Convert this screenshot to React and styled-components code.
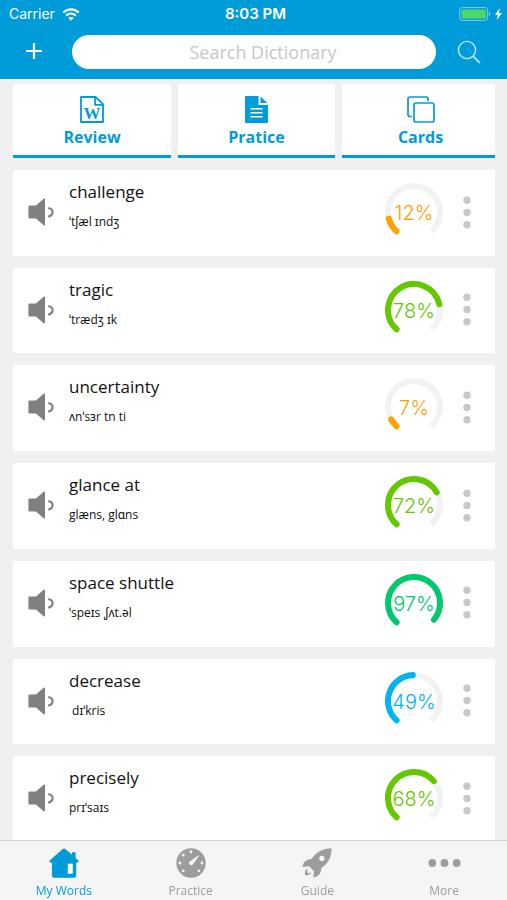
import React from "react";
import styled, { createGlobalStyle } from "styled-components";

const BLUE = "#009cd9";
const GREY = "#9d9d9d";
const SANS = '"Open Sans", "Noto Sans", sans-serif';
const SYSTEM = 'Inter, "Liberation Sans", sans-serif';

const GlobalStyle = createGlobalStyle`
  *, *::before, *::after { box-sizing: border-box; }
  body { margin: 0; background: #f0f0f0; font-family: ${SANS}; color: #111; }
  button, input { font: inherit; }
  svg { display: block; flex: none; }
`;

const Page = styled.div`
  min-height: 100vh;
  display: flex;
  flex-direction: column;
`;

const Header = styled.header`
  background: ${BLUE};
  color: #fff;
  padding-bottom: 10px;
`;

const StatusBar = styled.div`
  display: grid;
  grid-template-columns: 1fr auto 1fr;
  align-items: center;
  height: 28px;
  padding: 0 5px 0 9px;
  font-family: ${SYSTEM};
  font-size: 14px;
  line-height: 20px;
`;

const StatusSide = styled.div`
  display: flex;
  align-items: center;
  justify-content: ${(p) => (p.$end ? "flex-end" : "flex-start")};
  gap: ${(p) => (p.$end ? 4 : 7)}px;
`;

const Clock = styled.time`
  font-size: 15px;
  font-weight: 600;
`;

const SearchBar = styled.form`
  display: grid;
  grid-template-columns: 68px 1fr 57px;
  align-items: center;
  padding: 7px 10px 0 0;
  column-gap: 4px;
`;

const IconButton = styled.button`
  display: flex;
  align-items: center;
  justify-content: center;
  height: 34px;
  padding: 0;
  border: 0;
  background: none;
  color: inherit;
  cursor: pointer;
`;

const SearchInput = styled.input`
  min-width: 0;
  height: 34px;
  padding: 0 8px 0 26px;
  border: 0;
  border-radius: 17px;
  background: #fff;
  color: #111;
  font-size: 18px;
  line-height: 24px;
  text-align: center;
  &::placeholder { color: #c6c6cb; opacity: 1; }
`;

const Main = styled.main`
  flex: 1;
  display: flex;
  flex-direction: column;
  gap: 12px;
  padding: 5px 12px 0 13px;
`;

const Modes = styled.nav`
  display: grid;
  grid-template-columns: 158fr 157fr 153fr;
  gap: 7px;
`;

const ModeButton = styled.button`
  display: flex;
  flex-direction: column;
  align-items: center;
  gap: 2px;
  height: 74px;
  padding: 12px 0 0;
  border: 0;
  border-bottom: 3px solid ${BLUE};
  background: #fff;
  color: ${BLUE};
  font-size: 16px;
  font-weight: 700;
  line-height: 24px;
  cursor: pointer;
  &:last-child { padding-left: 4px; }
`;

const WordList = styled.ul`
  flex: 1;
  display: grid;
  grid-auto-rows: minmax(84px, 1fr);
  gap: 12px;
  margin: 0;
  padding: 0;
  list-style: none;
`;

const WordCard = styled.li`
  display: flex;
  align-items: flex-start;
  background: #fff;
  border-radius: 1px;
`;

const SpeakButton = styled(IconButton)`
  width: 56px;
  height: 84px;
`;

const WordText = styled.div`
  flex: 1;
  min-width: 0;
  padding-top: 10px;
`;

const Word = styled.h2`
  margin: 0;
  font-size: 17px;
  font-weight: 400;
  line-height: 24px;
`;

const Phonetic = styled.p`
  margin: 8px 0 0;
  font-size: 12px;
  line-height: 20px;
  white-space: pre;
`;

const GaugeBox = styled.div`
  display: grid;
  place-items: center;
  width: 60px;
  height: 84px;
  color: ${(p) => p.$color};
  font-family: ${SYSTEM};
  font-size: 20px;
  font-weight: 300;
  line-height: 24px;
  > * { grid-area: 1 / 1; }
`;

const GaugeLabel = styled.span`
  padding-top: 2px;
`;

const MenuButton = styled(IconButton)`
  width: 45px;
  height: 84px;
  margin-right: 6px;
`;

const TabBar = styled.nav`
  position: sticky;
  bottom: 0;
  display: grid;
  grid-template-columns: repeat(4, 1fr);
  height: 60px;
  margin-top: -2px;
  border-top: 1px solid #d2d2d2;
  background: #f5f5f5;
`;

const TabLink = styled.a`
  display: flex;
  flex-direction: column;
  align-items: center;
  gap: 3px;
  padding: 7px 0 0 1px;
  color: ${(p) => (p.$active ? BLUE : GREY)};
  font-size: 12px;
  line-height: 20px;
  text-decoration: none;
`;

const WifiIcon = () => (
  <svg width="18" height="13" viewBox="0 0 18 13" aria-hidden="true" fill="none" stroke="#fff" strokeWidth="2.2">
    <path d="M1.3 4.5C5.7.2 12.3.2 16.7 4.5" />
    <path d="M4.2 7.6c2.8-2.6 6.8-2.6 9.6 0" />
    <path d="M9 12.7 6.3 10c1.5-1.3 3.9-1.3 5.4 0Z" fill="#fff" stroke="none" />
  </svg>
);

const BatteryIcon = () => (
  <svg width="32" height="14" viewBox="0 0 32 14" aria-hidden="true">
    <rect x=".6" y=".6" width="28" height="12.8" rx="2.6" fill="none" stroke="#7fcbea" strokeWidth="1" />
    <rect x="2.4" y="2.4" width="24.4" height="9.2" rx="1" fill="#4cd864" />
    <path d="M30 4.8c1.8.6 1.8 3.8 0 4.4Z" fill="#7fcbea" />
  </svg>
);

const BoltIcon = () => (
  <svg width="7" height="12" viewBox="0 0 7 12" aria-hidden="true">
    <path d="M4.8 0 0 6.8h2.8L1.8 12 7 5H4Z" fill="#fff" />
  </svg>
);

const PlusIcon = () => (
  <svg width="18" height="20" viewBox="0 0 18 20" aria-hidden="true">
    <path d="M9 1v16M1 9h16" stroke="#fff" strokeWidth="2.2" fill="none" />
  </svg>
);

const SearchIcon = () => (
  <svg width="24" height="24" viewBox="0 0 24 24" aria-hidden="true" fill="none" stroke="#b9e8fa" strokeWidth="1.4">
    <circle cx="10" cy="10" r="8.6" />
    <path d="m16 16.2 6.8 6.6" strokeWidth="1.8" />
  </svg>
);

const WordFileIcon = () => (
  <svg width="24" height="27" viewBox="0 0 24 27" aria-hidden="true">
    <path d="M1 1h14.5L23 8.2V26H1ZM15 1v7.8h8" fill="none" stroke={BLUE} strokeWidth="1.8" strokeLinejoin="round" />
    <text x="12" y="23" textAnchor="middle" fontFamily="Liberation Serif, serif" fontWeight="700" fontSize="17" fill={BLUE}>
      W
    </text>
  </svg>
);

const DocumentIcon = () => (
  <svg width="23" height="27" viewBox="0 0 23 27" aria-hidden="true">
    <path d="M1 0h12.5v9H23v17q0 1-1 1H1q-1 0-1-1V1q0-1 1-1Z" fill={BLUE} />
    <path d="M15.5.5V7h6.8Z" fill={BLUE} />
    <path d="M5.5 12.7h12M5.5 16.7h12M5.5 20.7h12" stroke="#fff" strokeWidth="1.6" />
  </svg>
);

const CardsIcon = () => (
  <svg width="28" height="27" viewBox="0 0 28 27" aria-hidden="true" fill="none" stroke={BLUE} strokeWidth="1.7">
    <rect x="7" y="7" width="20" height="19" rx="2" />
    <path d="M5 20.5H3q-2 0-2-2V3q0-2 2-2h16q2 0 2 2v2.2" />
  </svg>
);

const SpeakerIcon = () => (
  <svg width="26" height="28" viewBox="0 0 26 28" aria-hidden="true">
    <path d="M1.6 7.5H8L15.6.7q1.4-.9 1.4.7v25.2q0 1.6-1.4.7L8 20.5H1.6Q.4 20.5.4 19.3V8.7q0-1.2 1.2-1.2Z" fill="#808080" />
    <path d="M20.2 10c5.8 1 5.8 7.6 0 8.6" fill="none" stroke="#808080" strokeWidth="2.2" />
  </svg>
);

const DotsIcon = () => (
  <svg width="8" height="33" viewBox="0 0 8 33" aria-hidden="true" fill="#c8c8c8">
    <circle cx="4" cy="4.2" r="3.7" />
    <circle cx="4" cy="16.5" r="3.7" />
    <circle cx="4" cy="28.8" r="3.7" />
  </svg>
);

const HomeIcon = () => (
  <svg width="30" height="30" viewBox="0 0 30 30" aria-hidden="true">
    <path
      d="M14 .8q1-.8 2 0l7 6V4.2h3.6V10l2.8 2.4q.9 1.9-1 2.2h-1.2v13q0 2.1-2.1 2.1H5q-2.1 0-2.1-2.1v-13H1.6q-1.9-.3-.9-2.2Z"
      fill={BLUE}
    />
    <rect x="18.8" y="15.7" width="5" height="10" fill="#fff" />
  </svg>
);

const SpeedIcon = () => (
  <svg width="30" height="30" viewBox="0 0 30 30" aria-hidden="true">
    <circle cx="15" cy="15" r="14.7" fill={GREY} />
    <g fill="#f5f5f5">
      <circle cx="15" cy="4" r="1.4" />
      <circle cx="7.2" cy="7.2" r="1.4" />
      <circle cx="4" cy="15" r="1.4" />
      <circle cx="7.2" cy="22.8" r="1.4" />
      <circle cx="22.8" cy="22.8" r="1.4" />
      <circle cx="26" cy="15" r="1.4" />
      <path d="M22.4 7.2q.8.3.4 1l-5.4 7.6q-1 1.8-2.8 1.4-2.2-1-1.4-3.2Z" />
    </g>
  </svg>
);

const RocketIcon = () => (
  <svg width="30" height="30" viewBox="0 0 30 30" aria-hidden="true">
    <path
      fill={GREY}
      fillRule="evenodd"
      d="M29.6.3C21 .3 14.6 3.9 9.7 10.7 4 11.5 1.2 14 .4 19l6.7-.7 4.8 4.9-.6 6.4c5.4-.8 7.7-4 8.1-9.5C26.3 15.3 29.6 9 29.6.3ZM19.8 7.8a2.6 2.6 0 1 1 0 5.2 2.6 2.6 0 0 1 0-5.2Z"
    />
    <path d="M5.7 20.5c-2.8 1.3-3 4-2.6 6.6 2.8.2 5.2-.2 6.1-3.1-1.2 1-2.3 1.2-3.4.9-.8-1.3-.8-2.8-.1-4.4Z" fill={GREY} />
  </svg>
);

const MoreIcon = () => (
  <svg width="33" height="30" viewBox="0 0 33 30" aria-hidden="true" fill={GREY}>
    <circle cx="4.3" cy="15" r="3.9" />
    <circle cx="16.5" cy="15" r="3.9" />
    <circle cx="28.7" cy="15" r="3.9" />
  </svg>
);

const START = -138;
const SWEEP = 276;
const RADIUS = 26;

const arc = (fraction) => {
  const at = (deg) => {
    const rad = (deg * Math.PI) / 180;
    return `${(30 + RADIUS * Math.sin(rad)).toFixed(2)} ${(30 - RADIUS * Math.cos(rad)).toFixed(2)}`;
  };
  const large = SWEEP * fraction > 180 ? 1 : 0;
  return `M${at(START)}A${RADIUS} ${RADIUS} 0 ${large} 1 ${at(START + SWEEP * fraction)}`;
};

const Gauge = ({ value, color }) => (
  <GaugeBox $color={color}>
    <svg width="60" height="60" viewBox="0 0 60 60" aria-hidden="true" fill="none" strokeWidth="6">
      <path d={arc(1)} stroke="#f2f2f2" />
      <path d={arc(value / 100)} stroke={color} strokeLinecap="round" />
    </svg>
    <GaugeLabel>{value}%</GaugeLabel>
  </GaugeBox>
);

const ORANGE = "#ffa200";
const GREEN = "#64c800";

const words = [
  { word: "challenge", phonetic: "ˈtʃæl ɪndʒ", score: 12, color: ORANGE },
  { word: "tragic", phonetic: "ˈtrædʒ ɪk", score: 78, color: GREEN },
  { word: "uncertainty", phonetic: "ʌnˈsɜr tn ti", score: 7, color: ORANGE },
  { word: "glance at", phonetic: "glæns, glɑns", score: 72, color: GREEN },
  { word: "space shuttle", phonetic: "ˈspeɪs ˌʃʌt.əl", score: 97, color: "#00c86e" },
  { word: "decrease", phonetic: " dɪˈkris", score: 49, color: "#00b4f0" },
  { word: "precisely", phonetic: "prɪˈsaɪs", score: 68, color: GREEN },
];

const modes = [
  { label: "Review", Icon: WordFileIcon },
  { label: "Pratice", Icon: DocumentIcon },
  { label: "Cards", Icon: CardsIcon },
];

const tabs = [
  { label: "My Words", Icon: HomeIcon, active: true },
  { label: "Practice", Icon: SpeedIcon },
  { label: "Guide", Icon: RocketIcon },
  { label: "More", Icon: MoreIcon },
];

export default function App() {
  return (
    <Page>
      <GlobalStyle />
      <Header>
        <StatusBar>
          <StatusSide>
            <span>Carrier</span>
            <WifiIcon />
          </StatusSide>
          <Clock>8:03 PM</Clock>
          <StatusSide $end>
            <BatteryIcon />
            <BoltIcon />
          </StatusSide>
        </StatusBar>
        <SearchBar role="search" onSubmit={(e) => e.preventDefault()}>
          <IconButton type="button" aria-label="Add word">
            <PlusIcon />
          </IconButton>
          <SearchInput type="text" aria-label="Search Dictionary" placeholder="Search Dictionary" />
          <IconButton type="submit" aria-label="Search">
            <SearchIcon />
          </IconButton>
        </SearchBar>
      </Header>
      <Main>
        <Modes aria-label="Study modes">
          {modes.map(({ label, Icon }) => (
            <ModeButton key={label} type="button">
              <Icon />
              {label}
            </ModeButton>
          ))}
        </Modes>
        <WordList>
          {words.map(({ word, phonetic, score, color }) => (
            <WordCard key={word}>
              <SpeakButton type="button" aria-label={`Listen to ${word}`}>
                <SpeakerIcon />
              </SpeakButton>
              <WordText>
                <Word>{word}</Word>
                <Phonetic>{phonetic}</Phonetic>
              </WordText>
              <Gauge value={score} color={color} />
              <MenuButton type="button" aria-label={`Options for ${word}`}>
                <DotsIcon />
              </MenuButton>
            </WordCard>
          ))}
        </WordList>
      </Main>
      <TabBar aria-label="Sections">
        {tabs.map(({ label, Icon, active }) => (
          <TabLink key={label} href="#" $active={active} aria-current={active ? "page" : undefined}>
            <Icon />
            {label}
          </TabLink>
        ))}
      </TabBar>
    </Page>
  );
}
